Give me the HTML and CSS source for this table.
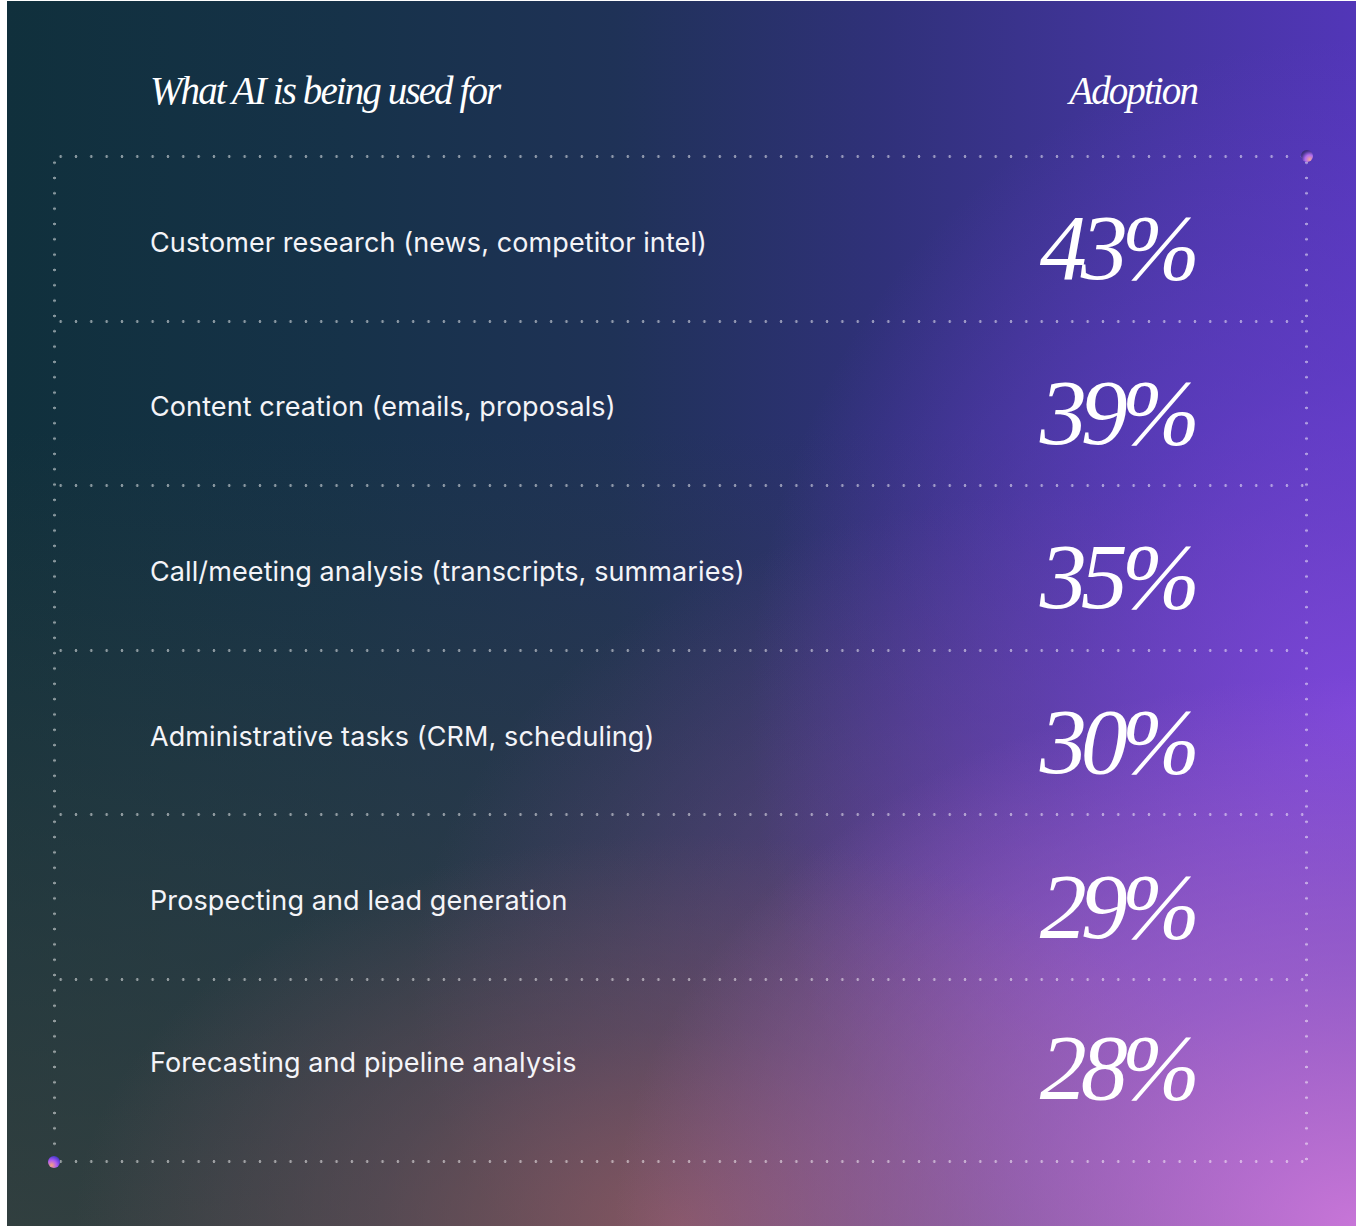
FILE: index.html
```html
<!DOCTYPE html>
<html lang="en">
<head>
<meta charset="utf-8">
<title>What AI is being used for</title>
<link rel="stylesheet" href="styles.css">
</head>
<body>
<div class="card">
  <header class="head">
    <h2 class="head-title">What AI is being used for</h2>
    <h2 class="head-title head-right">Adoption</h2>
  </header>
  <div class="frame">
    <span class="orb orb-tr"></span>
    <span class="orb orb-bl"></span>
    <div class="row"><span class="label">Customer research (news, competitor intel)</span><span class="pct">43%</span></div>
    <div class="row"><span class="label">Content creation (emails, proposals)</span><span class="pct">39%</span></div>
    <div class="row"><span class="label">Call/meeting analysis (transcripts, summaries)</span><span class="pct">35%</span></div>
    <div class="row"><span class="label">Administrative tasks (CRM, scheduling)</span><span class="pct">30%</span></div>
    <div class="row"><span class="label">Prospecting and lead generation</span><span class="pct">29%</span></div>
    <div class="row row-last"><span class="label">Forecasting and pipeline analysis</span><span class="pct">28%</span></div>
  </div>
</div>
</body>
</html>
```
FILE: styles.css
```css
html, body {
  margin: 0;
  padding: 0;
  background: #ffffff;
}
body {
  width: 1356px;
  height: 1230px;
  overflow: hidden;
}
.card {
  box-sizing: border-box;
  margin: 1px 0 0 7px;
  width: 1349px;
  height: 1225px;
  padding: 0 48px 0 46px;
  color: #ffffff;
  background:
    radial-gradient(ellipse 55% 45% at 100% 100%, rgba(205,120,220,0.95) 0%, rgba(180,110,215,0.6) 45%, rgba(180,110,215,0) 100%),
    radial-gradient(ellipse 45% 32% at 50% 100%, rgba(145,90,100,0.85) 0%, rgba(125,85,100,0.45) 50%, rgba(125,85,100,0) 100%),
    radial-gradient(ellipse 45% 55% at 100% 58%, rgba(125,70,220,0.95) 0%, rgba(110,65,210,0.5) 50%, rgba(110,65,210,0) 100%),
    radial-gradient(ellipse 50% 40% at 80% 80%, rgba(140,80,170,0.6) 0%, rgba(140,80,170,0) 100%),
    linear-gradient(180deg, rgba(60,68,64,0) 35%, rgba(60,68,64,0.75) 100%),
    linear-gradient(90deg, #10303c 0%, #163249 25%, #1f3257 45%, #30317a 65%, #44359f 85%, #5236b8 100%);
}
.head {
  display: flex;
  justify-content: space-between;
  align-items: center;
  height: 154px;
  padding: 24px 111px 0 97px;
  box-sizing: border-box;
}
.head-title {
  margin: 0;
  font-family: "Liberation Serif", "Times New Roman", serif;
  font-style: italic;
  font-weight: 400;
  font-size: 39px;
  letter-spacing: -1.9px;
  line-height: 1;
}
.frame {
  position: relative;
  background:
    radial-gradient(circle, rgba(255,255,255,0.5) 1.1px, rgba(255,255,255,0) 1.6px) 0 0 / 3px 15.33px repeat-y,
    radial-gradient(circle, rgba(255,255,255,0.5) 1.1px, rgba(255,255,255,0) 1.6px) 100% 0 / 3px 15.33px repeat-y,
    radial-gradient(circle, rgba(255,255,255,0.5) 1.1px, rgba(255,255,255,0) 1.6px) 0 100% / 15.33px 3px repeat-x;
}
.row {
  display: flex;
  justify-content: space-between;
  align-items: center;
  height: 164.6px;
  box-sizing: border-box;
  padding: 0 114px 0 97px;
  background: radial-gradient(circle, rgba(255,255,255,0.5) 1.1px, rgba(255,255,255,0) 1.6px) 0 0 / 15.33px 3px repeat-x;
}
.row-last {
  height: 185px;
  padding-bottom: 26px;
}
.label {
  font-family: "Inter", "Noto Sans", sans-serif;
  font-size: 27px;
  font-weight: 400;
  letter-spacing: 0.1px;
  color: #f4f4f8;
  padding-top: 10px;
}
.pct {
  font-family: "Liberation Serif", "Times New Roman", serif;
  font-style: italic;
  font-size: 94px;
  letter-spacing: -6px;
  line-height: 1;
  padding-top: 20px;
}
.orb {
  position: absolute;
  width: 12px;
  height: 12px;
  border-radius: 50%;
  z-index: 2;
}
.orb-tr {
  right: -5px;
  top: -5px;
  background: radial-gradient(circle at 72% 78%, #f2a39a 0%, #b06cf0 35%, #4a3590 65%, #17223a 100%);
}
.orb-bl {
  left: -5px;
  bottom: -5px;
  background: radial-gradient(circle at 30% 78%, #f7a37e 0%, #b05cf0 40%, #5a3fd8 70%, #27306a 100%);
}
```
